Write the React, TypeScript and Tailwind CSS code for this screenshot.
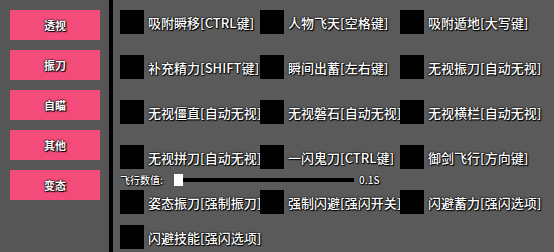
import React from 'react';

const tabs = ['透视', '振刀', '自瞄', '其他', '变态'];

const topRows = [
  ['吸附瞬移[CTRL键]', '人物飞天[空格键]', '吸附遁地[大写键]'],
  ['补充精力[SHIFT键]', '瞬间出蓄[左右键]', '无视振刀[自动无视]'],
  ['无视僵直[自动无视]', '无视磐石[自动无视]', '无视横栏[自动无视]'],
  ['无视拼刀[自动无视]', '一闪鬼刀[CTRL键]', '御剑飞行[方向键]'],
];

const bottomRows = [
  ['姿态振刀[强制振刀]', '强制闪避[强闪开关]', '闪避蓄力[强闪选项]'],
  ['闪避技能[强闪选项]'],
];

const outline = '[text-shadow:0_0_1px_#000,0_0_1px_#000,0_0_2px_#000,1px_1px_1px_#000]';

function Toggle({ label }: { label: string }) {
  return (
    <div className="flex h-6 w-[140px] items-center gap-[4px]">
      <span className="h-6 w-6 shrink-0 bg-black" />
      <span className={`whitespace-nowrap text-[13px] font-medium leading-none text-white ${outline}`}>{label}</span>
    </div>
  );
}

export default function App() {
  return (
    <div
      className="flex h-[252px] w-[554px] overflow-hidden bg-[#575757]"
      style={{ fontFamily: '"Noto Sans CJK SC", "Noto Sans", sans-serif' }}
    >
      <div className="flex w-[109px] shrink-0 flex-col gap-[10px] bg-[#565656] pl-[10px] pt-[10px]">
        {tabs.map((tab) => (
          <button
            key={tab}
            className={`flex h-[30px] w-[90px] items-center justify-center bg-[#f44c7a] text-[11px] font-bold text-white ${outline}`}
          >
            {tab}
          </button>
        ))}
      </div>
      <div className="w-[4px] shrink-0 bg-black" />

      <div className="flex flex-1 flex-col bg-[#5a5a5a] pl-[7px] pt-[10px]">
        <div className="flex flex-col gap-[21px]">
          {topRows.map((row, i) => (
            <div key={i} className="flex">
              {row.map((label) => (
                <Toggle key={label} label={label} />
              ))}
            </div>
          ))}
        </div>

        <div className="flex h-[21px] items-center">
          <span className={`w-[54px] text-[10px] font-medium leading-none text-white ${outline}`}>飞行数值:</span>
          <div className="flex w-[180px] items-center">
            <span className="h-[12px] w-[9px] shrink-0 bg-white" />
            <span className="h-[4px] flex-1 bg-black" />
          </div>
          <span className={`ml-[5px] text-[10px] font-medium leading-none text-white ${outline}`}>0.1S</span>
        </div>

        <div className="flex flex-col gap-[11px]">
          {bottomRows.map((row, i) => (
            <div key={i} className="flex">
              {row.map((label) => (
                <Toggle key={label} label={label} />
              ))}
            </div>
          ))}
        </div>
      </div>
    </div>
  );
}
